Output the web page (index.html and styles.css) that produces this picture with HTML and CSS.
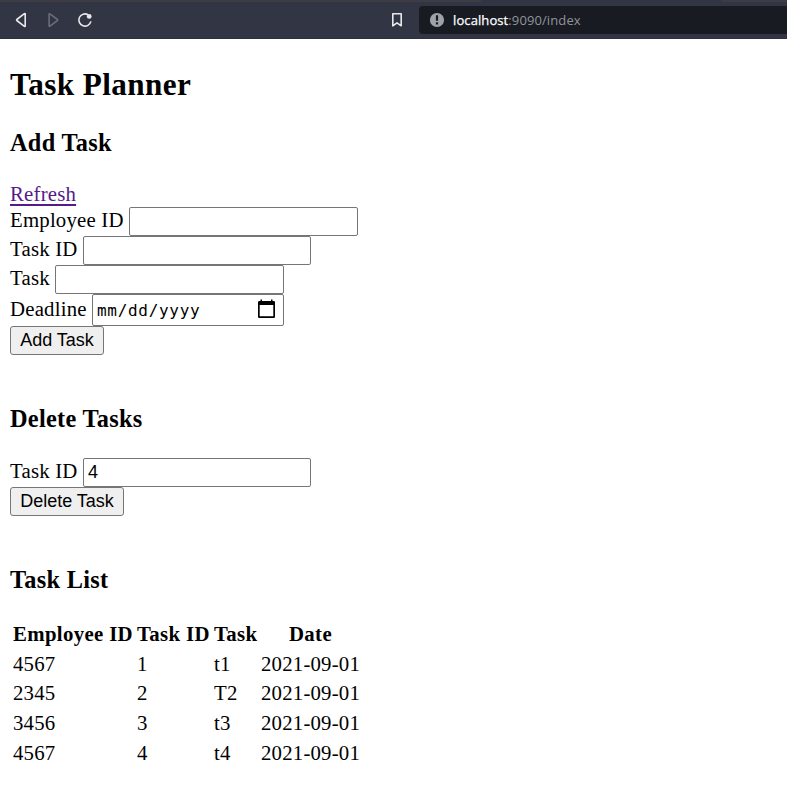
FILE: index.html
```html
<!DOCTYPE html>
<html lang="en">
<head>
<meta charset="utf-8">
<title>Task Planner</title>
<link rel="stylesheet" href="styles.css">
</head>
<body>
<header class="toolbar">
  <nav class="nav">
    <svg class="icon" width="14" height="16" viewBox="0 0 14 16"><path d="M10.2 1.7v12.6q-.4.2-.8 0L1.8 8.5q-.5-.5 0-1L9.4 1.7q.4-.3.8 0z"/></svg>
    <svg class="icon icon-off" width="14" height="16" viewBox="0 0 14 16"><path d="M2.1 1.9v12.2q.3.3.8 0L10.5 8.5q.5-.5 0-1L2.9 1.9q-.5-.3-.8 0z"/></svg>
    <svg class="icon reload" width="16" height="16" viewBox="0 0 16 16"><path d="M13.9 9.4A6.1 6.1 0 1 1 11 2.700"/><circle class="dot" cx="12.2" cy="4.400" r="2.400"/></svg>
  </nav>
  <svg class="icon bookmark" width="12" height="16" viewBox="0 0 12 16"><path d="M1.800 1.800h8.400v12L6 10.800l-4.200 3z"/></svg>
  <div class="address">
    <svg width="16" height="16" viewBox="0 0 16 16"><circle cx="8" cy="8" r="7.100" fill="#a0a2aa"/><path d="M6.900 3.300h2.200v5.500H6.900zM6.900 10.200h2.200v2.200H6.900z" fill="#181b22"/></svg>
    <span class="url"><b class="host">localhost</b>:9090/index</span>
  </div>
</header>
<main>
  <h2>Task Planner</h2>
  <h3>Add Task</h3>
  <div class="link-row"><a href="#">Refresh</a></div>
  <form class="add">
    <label class="row"><span class="l-emp">Employee ID</span><input type="text"></label>
    <label class="row"><span class="l-id">Task ID</span><input class="narrow" type="text"></label>
    <label class="row"><span class="l-task">Task</span><input type="text"></label>
    <div class="row row-date"><span class="l-date">Deadline</span>
      <div class="date"><span>mm/dd/yyyy</span>
        <svg width="20" height="20" viewBox="0 0 20 20"><path d="M3.500 .5h1.500v1.500h9V.5h1.500v1.500h1.300q1.200 0 1.200 1.200v14.600q0 1.200-1.200 1.200H2.200Q1 19 1 17.800V3.200Q1 2 2.200 2h1.300zM2.700 6v11.300h13.600V6z"/></svg>
      </div>
    </div>
    <button class="b-add" type="button">Add Task</button>
  </form>
  <h3>Delete Tasks</h3>
  <form class="delete">
    <label class="row"><span class="l-id">Task ID</span><input class="narrow" type="text" value="4"></label>
    <button class="b-delete" type="button">Delete Task</button>
  </form>
  <h3>Task List</h3>
  <table>
    <colgroup><col class="c1"><col class="c2"><col class="c3"><col class="c4"></colgroup>
    <tr><th>Employee ID</th><th>Task ID</th><th>Task</th><th class="center">Date</th></tr>
    <tr><td>4567</td><td>1</td><td>t1</td><td>2021-09-01</td></tr>
    <tr><td>2345</td><td>2</td><td>T2</td><td>2021-09-01</td></tr>
    <tr><td>3456</td><td>3</td><td>t3</td><td>2021-09-01</td></tr>
    <tr><td>4567</td><td>4</td><td>t4</td><td>2021-09-01</td></tr>
  </table>
</main>
</body>
</html>
```
FILE: styles.css
```css
* { box-sizing: border-box; }
body {
  margin: 0;
  background: #fff;
  color: #000;
  font: 20.8px/24px "Liberation Serif", "Times New Roman", serif;
  letter-spacing: .2px;
}
.toolbar {
  display: flex;
  align-items: center;
  height: 39px;
  padding-top: 1px;
  background: linear-gradient(90deg, #3d3c45 481px, #323543 481px 721px, #3d3c45 721px) 0 0 / 100% 2px no-repeat, #323543;
  border-bottom: 1px solid #302f42;
}
.nav { display: flex; gap: 18px; width: 391px; padding-left: 15px; }
.icon { fill: none; stroke: #e8e8ea; stroke-width: 1.6; stroke-linejoin: round; }
.icon-off { stroke: #6b6c78; }
.reload { margin-left: -2px; }
.dot { fill: #e8e8ea; stroke: none; }
.bookmark { margin-right: 16px; }
.address {
  display: flex;
  flex: 1;
  align-items: center;
  gap: 8px;
  height: 28px;
  padding-left: 10px;
  border-radius: 4px 0 0 4px;
  background: #181b22;
}
.url { color: #92949b; font: 13px/20px "Open Sans", sans-serif; letter-spacing: .1px; }
.host { color: #fff; font-weight: 400; -webkit-text-stroke: .25px #fff; }
main { padding: 30px 10px 0; }
h2, h3 { margin: 0; font-weight: 700; }
h2 { height: 32px; font-size: 31.2px; line-height: 32px; letter-spacing: .4px; }
h3 { height: 28px; font-size: 24.3px; line-height: 28px; letter-spacing: .3px; }
h2 + h3 { margin-top: 28px; }
.link-row { height: 24px; margin-top: 26px; line-height: 22px; }
.link-row a { color: #551a8b; text-underline-offset: 3px; }
.row { display: flex; height: 29px; line-height: 25px; white-space: nowrap; }
.row-date { height: 32px; line-height: 29px; }
.l-emp { width: 119px; }
.l-id { width: 73px; }
.l-task { width: 45px; }
.l-date { width: 82px; }
input, .date { border: 1px solid #767676; border-radius: 2px; background: #fff; }
input {
  width: 229px;
  height: 29px;
  margin: 0;
  padding: 0 4px 1px;
  color: #000;
  font: 18px "Liberation Sans", Arial, sans-serif;
}
.narrow { width: 228px; }
.date {
  display: flex;
  align-items: center;
  justify-content: space-between;
  width: 192px;
  padding: 0 6px 0 4px;
  font: 16px "DejaVu Sans Mono", monospace;
}
.date span { letter-spacing: .7px; }
.date svg { margin-top: -2px; }
button {
  display: block;
  height: 29px;
  margin: 0;
  padding: 0 0 1px;
  border: 1px solid #767676;
  border-radius: 3px;
  background: #efefef;
  color: #000;
  font: 18px "Liberation Sans", Arial, sans-serif;
}
.b-add { width: 94px; }
.b-delete { width: 114px; }
.add, .delete { margin-bottom: 50px; }
.delete { margin-top: 25px; }
table { width: 356px; margin-top: 25px; border-collapse: collapse; table-layout: fixed; }
.c1 { width: 124px; }
.c2 { width: 77px; }
.c3 { width: 47px; }
.c4 { width: 108px; }
th, td { height: 29.7px; padding: 0 0 0 3px; text-align: left; white-space: nowrap; }
th { letter-spacing: .35px; }
th.center { padding: 0 3px 0 0; text-align: center; }
```
